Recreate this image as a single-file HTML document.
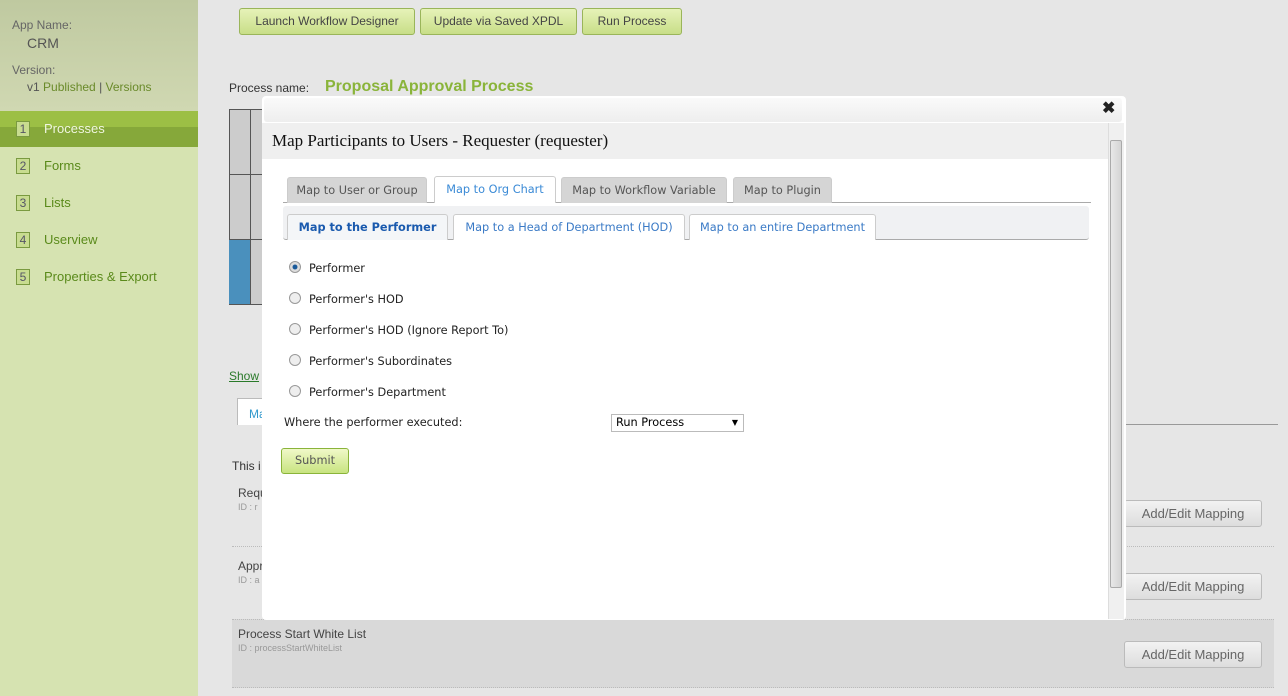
<!DOCTYPE html>
<html><head><style>
*{box-sizing:border-box}
body{margin:0;width:1288px;height:696px;overflow:hidden;background:#e6e6e6;font-family:"Liberation Sans",Verdana,sans-serif;position:relative}
.a{position:absolute}
.side{left:0;top:0;width:198px;height:696px;background:#d6e3b1}
.top{left:0;top:0;width:198px;height:111px;background:linear-gradient(#bfc9a0,#d0d8b2)}
.lab{font-size:12px;color:#666}
.nav{left:16px;font-size:13px;color:#5a8a1a}
.num{display:inline-block;width:14px;height:16px;border:1px solid #7a9a40;background:#c8dc90;text-align:center;font-size:12px;line-height:14px;color:#556;margin-right:14px}
.btn{top:8px;height:27px;border:1px solid #9ab55a;border-radius:3px;background:linear-gradient(#e6f2b8,#c8de88);font-size:12px;color:#444;line-height:25px;text-align:center}
.gbtn{height:27px;border:1px solid #bbb;border-radius:3px;background:linear-gradient(#f2f2f2,#ddd);font-size:13px;color:#666;line-height:25px;text-align:center;width:138px;left:1124px}
.dlg{left:262px;top:96px;width:864px;height:524px;background:#fff;border-radius:4px}
.tab{position:absolute;height:26px;font-size:11.3px;line-height:26px;text-align:center;border:1px solid #ccc;border-bottom:none;border-radius:3px 3px 0 0;color:#555;background:#d5d5d5;font-family:Verdana,"DejaVu Sans",sans-serif;white-space:nowrap}
.r{position:absolute;left:27px;font-size:11.3px;color:#222;font-family:Verdana,"DejaVu Sans",sans-serif}
.r i{display:inline-block;width:12px;height:12px;border:1px solid #999;border-radius:50%;background:#eee;vertical-align:-1px;margin-right:8px}
</style></head><body>
<div class="a side"></div>
<div class="a top"></div>
<div class="a lab" style="left:12px;top:18px">App Name:</div>
<div class="a" style="left:27px;top:35px;font-size:14px;color:#555">CRM</div>
<div class="a lab" style="left:12px;top:63px">Version:</div>
<div class="a" style="left:27px;top:80px;font-size:12px;color:#555">v1 <span style="color:#6a8a2a">Published</span> | <span style="color:#6a8a2a">Versions</span></div>
<div class="a" style="left:0;top:111px;width:198px;height:36px;background:linear-gradient(#9cbf45 0,#9cbf45 45%,#86a83a 45%)"></div>
<div class="a nav" style="top:121px;color:#f0f6e0"><span class="num">1</span>Processes</div>
<div class="a nav" style="top:158px"><span class="num">2</span>Forms</div>
<div class="a nav" style="top:195px"><span class="num">3</span>Lists</div>
<div class="a nav" style="top:232px"><span class="num">4</span>Userview</div>
<div class="a nav" style="top:269px"><span class="num">5</span>Properties &amp; Export</div>

<div class="a btn" style="left:239px;width:176px">Launch Workflow Designer</div>
<div class="a btn" style="left:420px;width:157px">Update via Saved XPDL</div>
<div class="a btn" style="left:582px;width:100px">Run Process</div>
<div class="a" style="left:229px;top:81px;font-size:12px;color:#333">Process name:</div>
<div class="a" style="left:325px;top:78px;font-size:16px;font-weight:bold;color:#8ab43a">Proposal Approval Process</div>
<div class="a" style="left:229px;top:109px;width:34px;height:196px;border:1px solid #555;background:#ccc"></div>
<div class="a" style="left:250px;top:109px;width:1px;height:196px;background:#555"></div>
<div class="a" style="left:229px;top:174px;width:34px;height:1px;background:#555"></div>
<div class="a" style="left:229px;top:239px;width:34px;height:1px;background:#555"></div>
<div class="a" style="left:229px;top:240px;width:21px;height:64px;background:#4a90bd"></div>
<div class="a" style="left:229px;top:369px;font-size:12px;color:#2a7a2a;text-decoration:underline">Show</div>
<div class="a" style="left:237px;top:398px;width:30px;height:27px;border:1px solid #bbb;border-bottom:none;background:#fff;font-size:12px;color:#39c;padding:8px 0 0 11px">Ma</div>
<div class="a" style="left:1126px;top:424px;width:152px;border-top:1px solid #999"></div>
<div class="a" style="left:232px;top:459px;font-size:12px;color:#333">This i</div>
<div class="a" style="left:238px;top:486px;font-size:12px;color:#444">Requ</div>
<div class="a" style="left:238px;top:502px;font-size:9px;color:#999">ID : r</div>
<div class="a" style="left:232px;top:546px;width:1042px;border-top:1px dotted #bbb"></div>
<div class="a" style="left:238px;top:559px;font-size:12px;color:#444">Appr</div>
<div class="a" style="left:238px;top:575px;font-size:9px;color:#999">ID : a</div>
<div class="a" style="left:232px;top:619px;width:1042px;height:69px;background:#d9d9d9;border-top:1px dotted #bbb;border-bottom:1px dotted #bbb"></div>
<div class="a" style="left:238px;top:627px;font-size:12px;color:#444">Process Start White List</div>
<div class="a" style="left:238px;top:643px;font-size:9px;color:#999">ID : processStartWhiteList</div>
<div class="a gbtn" style="top:500px">Add/Edit Mapping</div>
<div class="a gbtn" style="top:573px">Add/Edit Mapping</div>
<div class="a gbtn" style="top:641px">Add/Edit Mapping</div>

<div class="a dlg">
 <div class="a" style="left:2px;top:2px;width:858px;height:24px;background:linear-gradient(#fafafa,#eee);border-radius:3px"></div>
 <div class="a" style="left:840px;top:2px;font-size:16px;font-weight:bold;color:#222">✖</div>
 <div class="a" style="left:0;top:27px;width:846px;height:36px;background:#efefef;font-family:'Liberation Serif',serif;font-size:17px;color:#111;padding:8px 0 0 10px">Map Participants to Users - Requester (requester)</div>
 <div class="a" style="left:846px;top:27px;width:16px;height:496px;background:#f0f0f0;border-left:1px solid #ddd"></div>
 <div class="a" style="left:848px;top:44px;width:12px;height:448px;border:1px solid #aaa;border-radius:2px;background:linear-gradient(90deg,#e8e8e8,#d4d4d4)"></div>
 <div class="a" style="left:21px;top:106px;width:808px;border-top:1px solid #aaa"></div>
 <div class="tab" style="left:25px;top:81px;width:140px">Map to User or Group</div>
 <div class="tab" style="left:172px;top:80px;width:122px;height:27px;background:#fff;color:#3a8ad6">Map to Org Chart</div>
 <div class="tab" style="left:299px;top:81px;width:166px">Map to Workflow Variable</div>
 <div class="tab" style="left:471px;top:81px;width:99px">Map to Plugin</div>
 <div class="a" style="left:21px;top:110px;width:806px;height:34px;background:#f0f1f3;border-bottom:1px solid #aaa;border-radius:3px"></div>
 <div class="tab" style="left:25px;top:118px;width:161px;background:#f4f6f8;color:#1a5aae;font-weight:bold">Map to the Performer</div>
 <div class="tab" style="left:191px;top:118px;width:232px;background:#fff;color:#3a7ac6">Map to a Head of Department (HOD)</div>
 <div class="tab" style="left:427px;top:118px;width:187px;background:#fff;color:#3a7ac6">Map to an entire Department</div>
 <div class="r" style="top:165px"><i style="background:radial-gradient(#1a5a9a 30%,#ddd 40%)"></i>Performer</div>
 <div class="r" style="top:196px"><i></i>Performer's HOD</div>
 <div class="r" style="top:227px"><i></i>Performer's HOD (Ignore Report To)</div>
 <div class="r" style="top:258px"><i></i>Performer's Subordinates</div>
 <div class="r" style="top:289px"><i></i>Performer's Department</div>
 <div class="r" style="left:22px;top:320px">Where the performer executed:</div>
 <div class="a" style="left:349px;top:318px;width:133px;height:18px;border:1px solid #bbb;font-size:11.3px;padding:1px 4px;font-family:Verdana,'DejaVu Sans',sans-serif">Run Process<span style="position:absolute;right:5px;top:3px;font-size:8px">▼</span></div>
 <div class="a" style="left:19px;top:352px;width:68px;height:26px;border:1px solid #8ab43a;border-radius:3px;background:linear-gradient(#f0f8c8,#c8e480);font-size:11.3px;color:#555;text-align:center;line-height:24px;font-family:Verdana,'DejaVu Sans',sans-serif">Submit</div>
</div>
</body></html>
